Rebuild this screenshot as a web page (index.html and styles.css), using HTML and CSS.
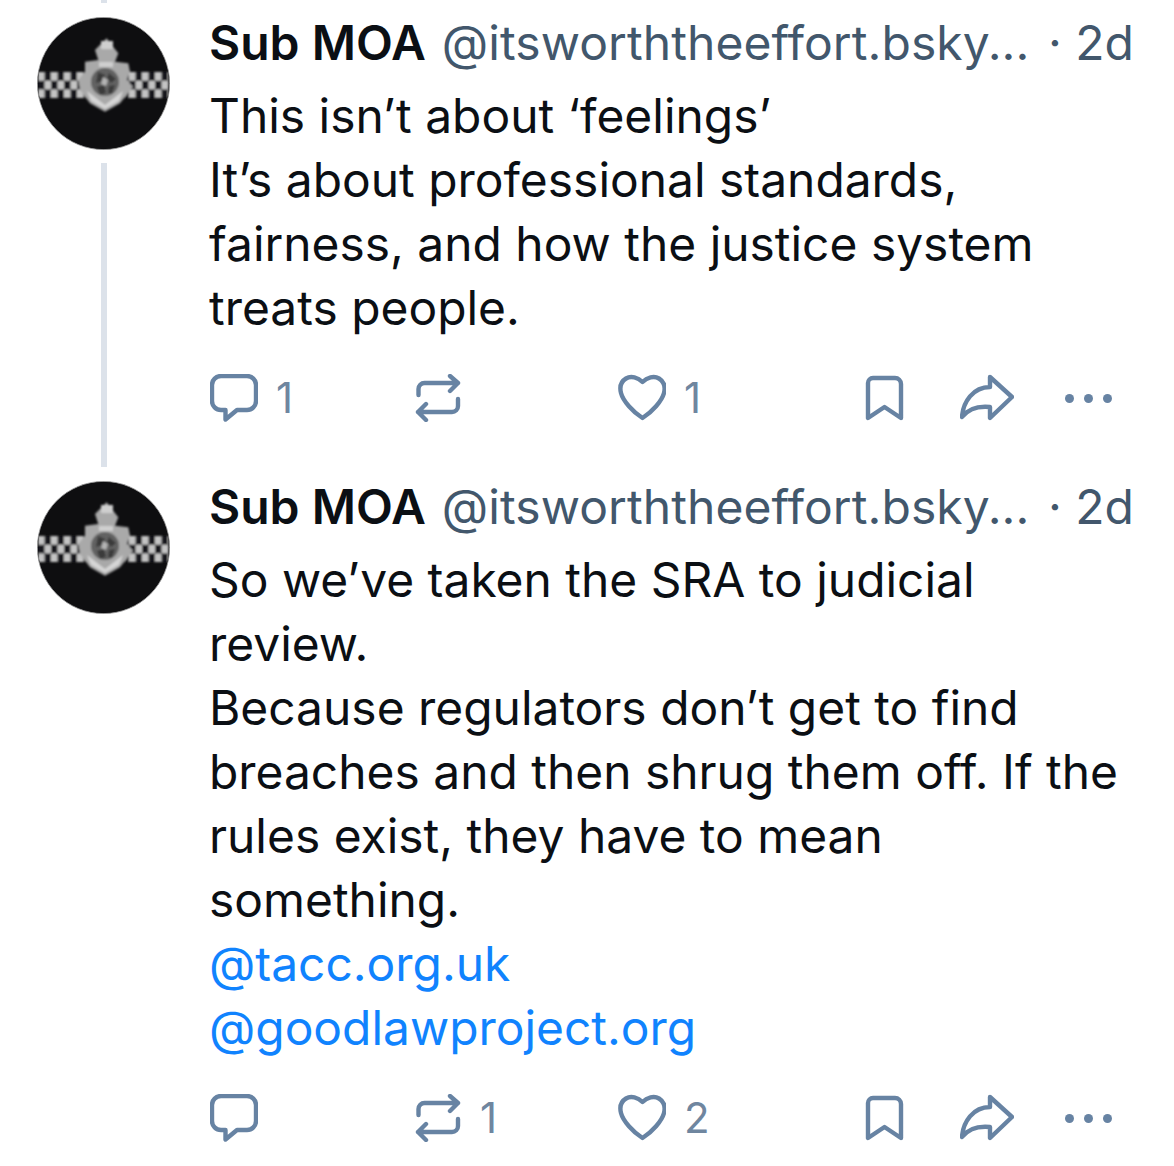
FILE: index.html
```html
<!DOCTYPE html>
<html lang="en">
<head>
<meta charset="utf-8">
<title>Sub MOA thread</title>
<link rel="stylesheet" href="styles.css">
</head>
<body>
<svg class="defs" width="0" height="0" aria-hidden="true">
  <defs>
    <filter id="soft" x="-10%" y="-10%" width="120%" height="120%"><feGaussianBlur stdDeviation="0.9"/></filter>
    <pattern id="check" width="13" height="26" patternUnits="userSpaceOnUse" x="1" y="55">
      <rect width="13" height="26" fill="#17171a"/>
      <rect width="6.5" height="8.7" fill="#c4c4c4"/>
      <rect x="6.5" y="8.7" width="6.5" height="8.7" fill="#c4c4c4"/>
      <rect y="17.4" width="6.5" height="8.7" fill="#c4c4c4"/>
    </pattern>
    <clipPath id="disc"><circle cx="66.5" cy="66.5" r="65.5"/></clipPath>
    <symbol id="avatar" viewBox="0 0 133 133">
      <circle cx="66.5" cy="66.5" r="66.1" fill="#0e0e10" stroke="#9a9a9a" stroke-width="0.8"/>
      <g filter="url(#soft)" clip-path="url(#disc)">
        <rect x="1" y="55" width="131" height="26" fill="url(#check)"/>
        <path d="M69.7 21.3 74.7 28 81.3 36.3 78 44.7 91.3 46.3 93 54.7 89.7 63 96 69.7 83 86.3 68 94.7 53 86.3 43 73 41.3 63 48 54.7 48 44.7 61.3 43 58 33 64.7 26.3Z" fill="#a9a9a9"/>
        <circle cx="68" cy="65" r="14" fill="#626262"/>
        <path d="M61 55 68 58 66 64 59 66ZM72 56 79 62 74 66 70 61ZM60 70 67 68 69 76 63 78ZM72 69 78 68 75 77 71 76Z" fill="#3a3a3a"/>
        <path d="M66 60 71 63 69 69 64 67Z" fill="#b4b4b4"/>
        <path d="M64 24h12v8h-12zM62 45h14v5h-14z" fill="#cfcfcf"/>
        <path d="M50 74 68 88 86 74 82 84 68 92 54 84Z" fill="#d6d6d6"/>
      </g>
    </symbol>
    <symbol id="i-reply" viewBox="0 0 48 48">
      <path d="M11 2H37a9 9 0 0 1 9 9V27a9 9 0 0 1-9 9H27L15.5 45.5V36H11a9 9 0 0 1-9-9V11a9 9 0 0 1 9-9Z"/>
    </symbol>
    <symbol id="i-repost" viewBox="0 0 48 48">
      <path d="M4.5 21V15a6 6 0 0 1 6-6H44M36 2l8 7-8 8M44 25v7a6 6 0 0 1-6 6H4M12 30l-8 8 8 8"/>
    </symbol>
    <symbol id="i-like" viewBox="0 0 48 48">
      <path d="M24.5 8C20 3.5 13 1.5 8 4.5 3 7.5 1.5 13 3 19 5 27 15 38 24.5 44 34 38 44 27 46 19 47.5 13 46 7.5 41 4.5 36 1.5 29 3.5 24.5 8Z"/>
    </symbol>
    <symbol id="i-save" viewBox="0 0 48 48">
      <path d="M11 4H33a6 6 0 0 1 6 6V44L22.5 33 6 44V9a5 5 0 0 1 5-5Z"/>
    </symbol>
    <symbol id="i-share" viewBox="0 0 54 48">
      <path d="M30 3 52 23 30 44V33C20 32 9 34 2 43 3 28 13 13 30 13Z"/>
    </symbol>
  </defs>
</svg>

<article class="post">
  <div class="rail">
    <span class="stub"></span>
    <svg class="avatar"><use href="#avatar"/></svg>
    <span class="line"></span>
  </div>
  <div class="main">
    <header class="meta">
      <strong class="name">Sub MOA</strong>
      <span class="handle">@itsworththeeffort.bsky...</span>
      <span class="age">· 2d</span>
    </header>
    <p class="body">This isn’t about ‘feelings’<br>It’s about professional standards, fairness, and how the justice system treats people.</p>
    <footer class="actions">
      <span class="act"><svg class="ico"><use href="#i-reply"/></svg><span class="count">1</span></span>
      <span class="act"><svg class="ico"><use href="#i-repost"/></svg></span>
      <span class="act"><svg class="ico"><use href="#i-like"/></svg><span class="count">1</span></span>
      <span class="act"><svg class="ico"><use href="#i-save"/></svg></span>
      <span class="act"><svg class="ico wide"><use href="#i-share"/></svg></span>
      <span class="more"><i></i><i></i><i></i></span>
    </footer>
  </div>
</article>

<article class="post">
  <div class="rail">
    <span class="stub"></span>
    <svg class="avatar"><use href="#avatar"/></svg>
  </div>
  <div class="main">
    <header class="meta">
      <strong class="name">Sub MOA</strong>
      <span class="handle">@itsworththeeffort.bsky...</span>
      <span class="age">· 2d</span>
    </header>
    <p class="body">So we’ve taken the SRA to judicial review.<br>Because regulators don’t get to find breaches and then shrug them off. If the rules exist, they have to mean something.<br><a class="link" href="#">@tacc.org.uk</a><br><a class="link" href="#">@goodlawproject.org</a></p>
    <footer class="actions">
      <span class="act"><svg class="ico"><use href="#i-reply"/></svg></span>
      <span class="act"><svg class="ico"><use href="#i-repost"/></svg><span class="count">1</span></span>
      <span class="act"><svg class="ico"><use href="#i-like"/></svg><span class="count">2</span></span>
      <span class="act"><svg class="ico"><use href="#i-save"/></svg></span>
      <span class="act"><svg class="ico wide"><use href="#i-share"/></svg></span>
      <span class="more"><i></i><i></i><i></i></span>
    </footer>
  </div>
</article>
</body>
</html>
```

FILE: styles.css
```css
* { box-sizing: border-box; }
html, body { margin: 0; background: #fff; }
body {
  width: 1174px;
  font-family: Inter, "Liberation Sans", sans-serif;
  color: #0b0f14;
  overflow: hidden;
}
.defs { position: absolute; }
.post {
  display: flex;
  padding-left: 37px;
}
.post + .post { padding-bottom: 23px; }
.rail {
  width: 133px;
  flex: none;
  display: flex;
  flex-direction: column;
  align-items: center;
}
.stub {
  width: 6px;
  height: 3px;
  margin-bottom: 14px;
  background: #dce2ea;
}
.avatar {
  width: 133px;
  height: 133px;
  flex: none;
}
.line {
  flex: 1;
  width: 6px;
  margin-top: 13px;
  background: #dce2ea;
}
.main {
  width: 925px;
  margin-left: 39px;
  padding-top: 11px;
}
.meta {
  display: flex;
  align-items: center;
  height: 64px;
  font-size: 48px;
  line-height: 64px;
  white-space: nowrap;
}
.name {
  flex: none;
  font-weight: 600;
  color: #0b0f14;
}
.handle {
  flex: none;
  margin-left: 16px;
  letter-spacing: 0.08px;
  color: #42576c;
}
.age {
  flex: none;
  margin-left: auto;
  color: #42576c;
}
.body {
  margin: 9px 0 0;
  font-size: 47.92px;
  line-height: 64px;
}
.link {
  color: #1083fe;
  text-decoration: none;
}
.actions {
  display: grid;
  grid-template-columns: 204px 204px 244px 98px 104px auto;
  align-items: center;
  height: 48px;
  margin-top: 34px;
  margin-bottom: 42px;
  padding-left: 1px;
}
.post + .post .actions { margin-bottom: 0; }
.act {
  display: flex;
  align-items: center;
  gap: 18px;
}
.ico {
  width: 48px;
  height: 48px;
  flex: none;
  fill: none;
  stroke: #6783a3;
  stroke-width: 4.4;
  stroke-linecap: round;
  stroke-linejoin: round;
  overflow: visible;
}
.ico.wide { width: 54px; }
.count {
  font-size: 42px;
  line-height: 48px;
  color: #6f869f;
}
.more {
  display: flex;
  gap: 10px;
  margin-left: 1px;
}
.more i {
  width: 9px;
  height: 9px;
  border-radius: 50%;
  background: #6783a3;
}
```
